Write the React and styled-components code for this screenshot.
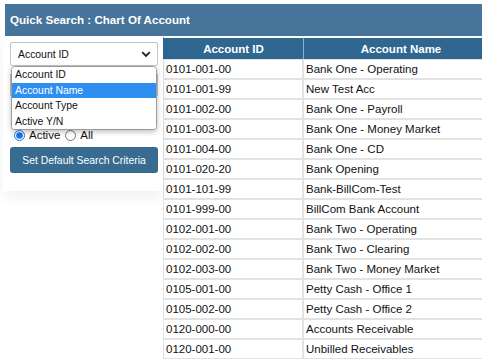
import React from "react";
import styled, { createGlobalStyle } from "styled-components";

const accounts = [
  ["0101-001-00", "Bank One - Operating"],
  ["0101-001-99", "New Test Acc"],
  ["0101-002-00", "Bank One - Payroll"],
  ["0101-003-00", "Bank One - Money Market"],
  ["0101-004-00", "Bank One - CD"],
  ["0101-020-20", "Bank Opening"],
  ["0101-101-99", "Bank-BillCom-Test"],
  ["0101-999-00", "BillCom Bank Account"],
  ["0102-001-00", "Bank Two - Operating"],
  ["0102-002-00", "Bank Two - Clearing"],
  ["0102-003-00", "Bank Two - Money Market"],
  ["0105-001-00", "Petty Cash - Office 1"],
  ["0105-002-00", "Petty Cash - Office 2"],
  ["0120-000-00", "Accounts Receivable"],
  ["0120-001-00", "Unbilled Receivables"]
];

const options = ["Account ID", "Account Name", "Account Type", "Active Y/N"];

class App extends React.Component {
  render() {
    return (
      <Page>
        <GlobalStyle />
        <TitleBar>Quick Search : Chart Of Account</TitleBar>
        <Body>
          <Sidebar>
            <SelectBox>
              <span>Account ID</span>
              <svg width="10" height="7" viewBox="0 0 10 7">
                <path d="M1.2 1.2 L5 5 L8.8 1.2" fill="none" stroke="#222" strokeWidth="1.8" />
              </svg>
            </SelectBox>
            <SearchInput type="text" />
            <RadioRow>
              <input type="radio" name="active" defaultChecked />
              <label>Active</label>
              <input type="radio" name="active" />
              <label>All</label>
            </RadioRow>
            <Button>Set Default Search Criteria</Button>
            <OptionList>
              {options.map((o, i) => (
                <Option key={o} selected={i === 1}>
                  {o}
                </Option>
              ))}
            </OptionList>
          </Sidebar>
          <Grid>
            <thead>
              <tr>
                <HeadCell width={139}>Account ID</HeadCell>
                <HeadCell width={194}>Account Name</HeadCell>
              </tr>
            </thead>
            <tbody>
              {accounts.map(([id, name]) => (
                <tr key={id}>
                  <Cell>{id}</Cell>
                  <Cell>{name}</Cell>
                </tr>
              ))}
            </tbody>
          </Grid>
        </Body>
      </Page>
    );
  }
}

export default App;

const GlobalStyle = createGlobalStyle`
  body {
    margin: 0;
    overflow: hidden;
    background: #fff;
    font-family: "Liberation Sans", Arial, sans-serif;
  }
`;

const Page = styled.div`
  padding: 4px 0 0 5px;
  width: 477px;
  height: 355px;
  overflow: hidden;
`;

const TitleBar = styled.div`
  height: 32px;
  line-height: 32px;
  background: #46749a;
  color: #fff;
  font-weight: bold;
  font-size: 11.6px;
  padding-left: 5px;
`;

const Body = styled.div`
  display: flex;
  align-items: flex-start;
  margin-top: 1px;
`;

const Sidebar = styled.div`
  position: relative;
  flex: none;
  width: 148px;
  padding: 5px 5px 18px 7px;
  margin-left: -2px;
  box-shadow: 0 6px 14px rgba(0, 0, 0, 0.06);
`;

const SelectBox = styled.div`
  display: flex;
  align-items: center;
  justify-content: space-between;
  box-sizing: border-box;
  height: 24px;
  padding: 0 6px 0 7px;
  border: 1px solid #c4c4c4;
  border-radius: 2px;
  font-size: 10.4px;
  color: #111;
  background: #fff;
`;

const SearchInput = styled.input`
  box-sizing: border-box;
  display: block;
  width: 100%;
  height: 22px;
  margin: 8px 0 0;
  border: 1px solid #c4c4c4;
`;

const RadioRow = styled.div`
  display: flex;
  align-items: center;
  height: 16px;
  margin-top: 31px;
  font-size: 11.5px;
  color: #111;

  input {
    width: 11px;
    height: 11px;
    margin: 0 4px 0 4px;
    accent-color: #1a73e8;
  }

  label {
    margin-right: 1px;
  }
`;

const Button = styled.button`
  display: block;
  width: 148px;
  height: 26px;
  margin-top: 4px;
  border: 0;
  border-radius: 3px;
  background: #386b90;
  color: #fff;
  font-family: "Liberation Sans", Arial, sans-serif;
  font-size: 10.4px;
`;

const OptionList = styled.ul`
  position: absolute;
  top: 29px;
  left: 8px;
  width: 146px;
  box-sizing: border-box;
  margin: 0;
  padding: 0;
  list-style: none;
  background: #fff;
  border: 1px solid #9a9a9a;
  border-radius: 4px;
  overflow: hidden;
  box-shadow: 0 2px 5px rgba(0, 0, 0, 0.25);
`;

const Option = styled.li`
  height: 15.5px;
  line-height: 15.5px;
  padding-left: 3px;
  font-size: 10.4px;
  color: ${(p) => (p.selected ? "#fff" : "#111")};
  background: ${(p) => (p.selected ? "#2f8ff1" : "#fff")};
`;

const Grid = styled.table`
  flex: none;
  border-collapse: separate;
  border-spacing: 0;
  table-layout: fixed;
  font-size: 11.5px;
`;

const HeadCell = styled.th`
  width: ${(p) => p.width}px;
  height: 21px;
  padding: 0;
  background: #2f6791;
  color: #fff;
  font-weight: bold;
  text-align: center;
  border-top: 1px solid #fff;
  border-left: 1px solid #8fb0c8;

  &:first-child {
    border-left-color: #2f6791;
  }
`;

const Cell = styled.td`
  height: 18px;
  padding: 0 0 0 2px;
  border: 1px solid #e2e2e2;
  color: #111;
  white-space: nowrap;
  overflow: hidden;
`;
